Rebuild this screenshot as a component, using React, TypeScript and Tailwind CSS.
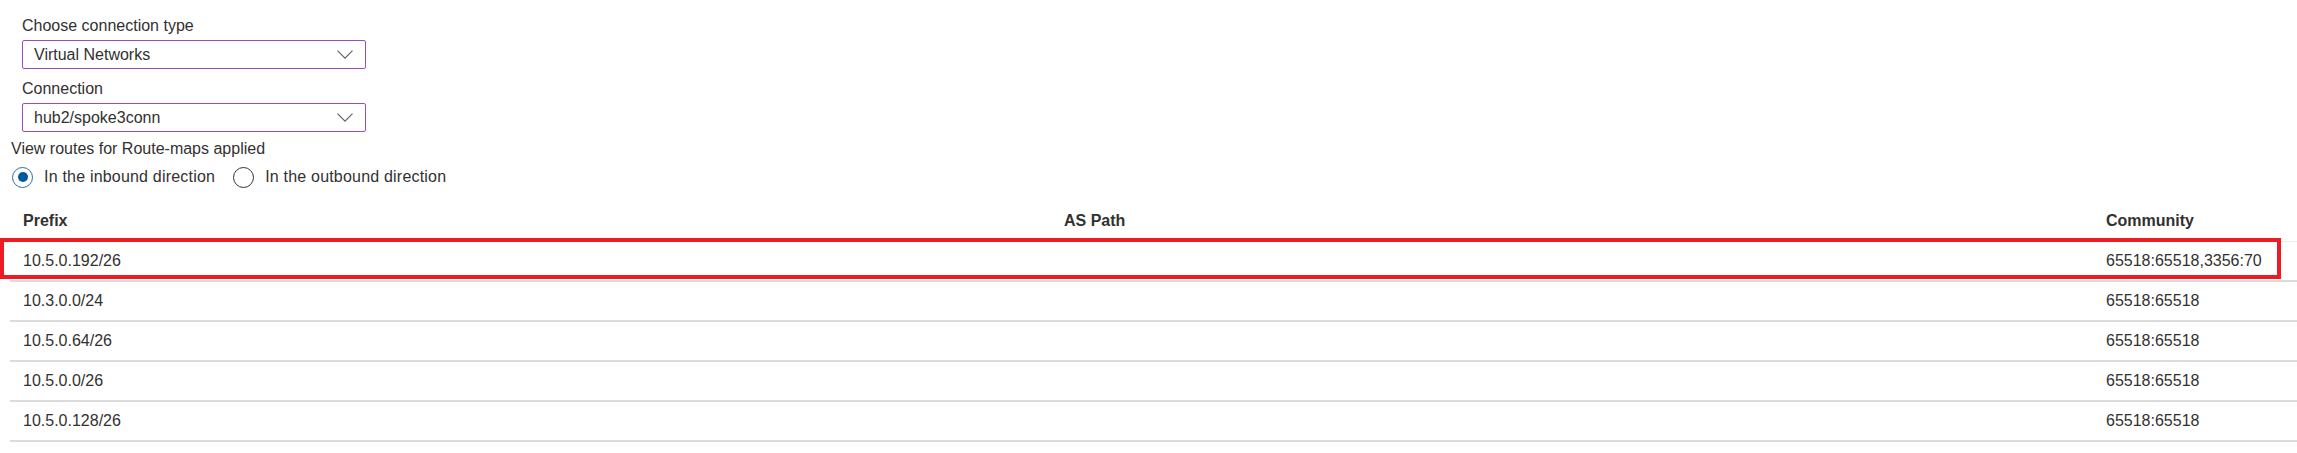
const rows = [
    { prefix: "10.5.0.192/26", path: "", community: "65518:65518,3356:70" },
    { prefix: "10.3.0.0/24", path: "", community: "65518:65518" },
    { prefix: "10.5.0.64/26", path: "", community: "65518:65518" },
    { prefix: "10.5.0.0/26", path: "", community: "65518:65518" },
    { prefix: "10.5.0.128/26", path: "", community: "65518:65518" },
];

function Chevron() {
    return (
        <svg width="16" height="9" viewBox="0 0 16 9" fill="none">
            <polyline points="0.5,0.7 8,8.2 15.5,0.7" stroke="#605e5c" strokeWidth="1.1" />
        </svg>
    );
}

function Dropdown({ label, value }: { label: string; value: string }) {
    return (
        <div className="flex flex-col">
            <label className="h-[20px] leading-[20px] mb-[4px]">{label}</label>
            <div className="flex items-center justify-between w-[344px] h-[29px] pl-[11px] pr-[12px] border border-[#9b4dbf] rounded-[2px]">
                <span>{value}</span>
                <Chevron />
            </div>
        </div>
    );
}

function Radio({ checked, label }: { checked: boolean; label: string }) {
    return (
        <div className="flex items-center gap-[11px]">
            {checked ? (
                <span className="flex items-center justify-center w-[21px] h-[21px] rounded-full border-[1.5px] border-[#2a6ea6]">
                    <span className="w-[10px] h-[10px] rounded-full bg-[#005a9e]" />
                </span>
            ) : (
                <span className="w-[21px] h-[21px] rounded-full border-[1.5px] border-[#323130]" />
            )}
            <span className="tracking-[0.2px]">{label}</span>
        </div>
    );
}

export default function App() {
    return (
        <div
            className="w-[2297px] h-[453px] bg-white text-[#323130] text-[16px] overflow-hidden"
            style={{ fontFamily: '"Segoe UI", "Liberation Sans", Arial, sans-serif' }}
        >
            <div className="flex flex-col pt-[16px] pl-[22px] gap-[10px]">
                <Dropdown label="Choose connection type" value="Virtual Networks" />
                <Dropdown label="Connection" value="hub2/spoke3conn" />
            </div>

            <div className="pl-[11px] mt-[7px]">
                <p className="h-[20px] leading-[20px]">View routes for Route-maps applied</p>
                <div className="flex items-center gap-[18px] h-[28px] mt-[4px] pl-[1px]">
                    <Radio checked label="In the inbound direction" />
                    <Radio checked={false} label="In the outbound direction" />
                </div>
            </div>

            <div className="relative ml-[10px] mt-[9px]">
                <div className="grid grid-cols-[1041px_1042px_1fr] h-[42px] items-center font-semibold border-b border-[#edebe9]">
                    <div className="pl-[13px]">Prefix</div>
                    <div className="pl-[13px]">AS Path</div>
                    <div className="pl-[13px]">Community</div>
                </div>
                {rows.map((r) => (
                    <div
                        key={r.prefix}
                        className="grid grid-cols-[1041px_1042px_1fr] h-[40px] items-center border-b-2 border-[#dcdcdc]"
                    >
                        <div className="pl-[13px]">{r.prefix}</div>
                        <div className="pl-[13px]">{r.path}</div>
                        <div className="pl-[13px]">{r.community}</div>
                    </div>
                ))}

                {/* highlight box around the first route */}
                <div className="absolute left-[-10px] top-[38px] w-[2281px] h-[41px] border-[4px] border-[#ed1c24] pointer-events-none" />
            </div>
        </div>
    );
}
